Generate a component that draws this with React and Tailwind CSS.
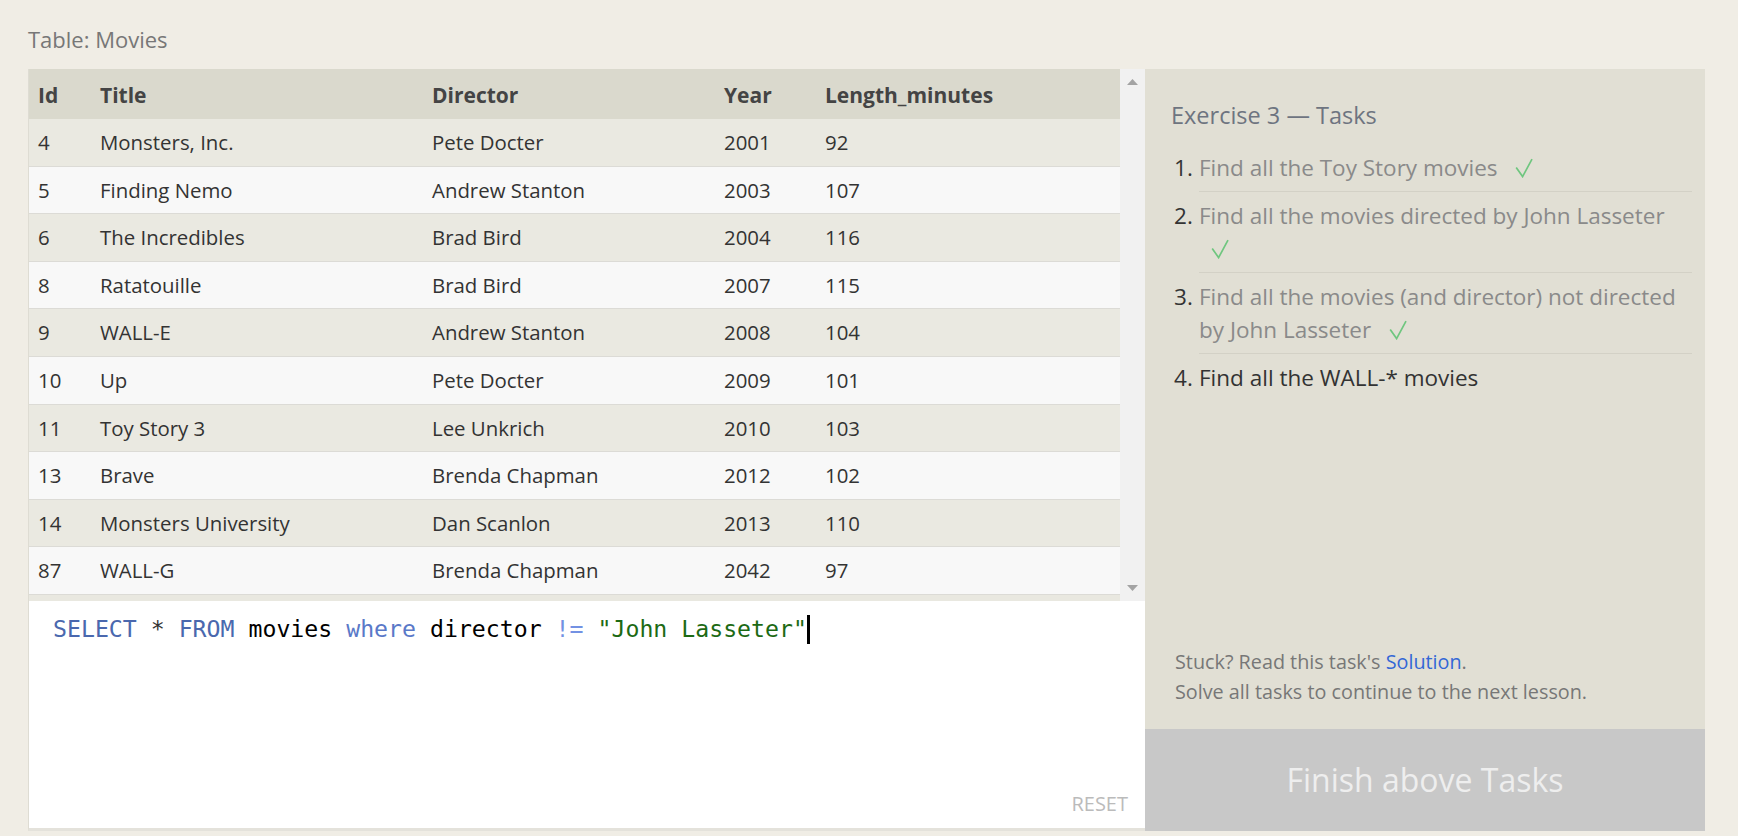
import React from 'react';

const rows = [
  [4, 'Monsters, Inc.', 'Pete Docter', 2001, 92],
  [5, 'Finding Nemo', 'Andrew Stanton', 2003, 107],
  [6, 'The Incredibles', 'Brad Bird', 2004, 116],
  [8, 'Ratatouille', 'Brad Bird', 2007, 115],
  [9, 'WALL-E', 'Andrew Stanton', 2008, 104],
  [10, 'Up', 'Pete Docter', 2009, 101],
  [11, 'Toy Story 3', 'Lee Unkrich', 2010, 103],
  [13, 'Brave', 'Brenda Chapman', 2012, 102],
  [14, 'Monsters University', 'Dan Scanlon', 2013, 110],
  [87, 'WALL-G', 'Brenda Chapman', 2042, 97],
];

const tasks = [
  { text: 'Find all the Toy Story movies', done: true },
  { text: 'Find all the movies directed by John Lasseter', done: true, breakCheck: true },
  { text: 'Find all the movies (and director) not directed by John Lasseter', done: true },
  { text: 'Find all the WALL-* movies', done: false },
];

function Check() {
  return (
    <svg width="18" height="20" viewBox="0 0 18 20" className="inline-block ml-3 -mt-1 align-middle">
      <path d="M1.2 9.5 L7.6 18.6 L17 1.2" fill="none" stroke="#6fc67f" strokeWidth="1.7" strokeLinejoin="miter" />
    </svg>
  );
}

function Cells({ cells, head }) {
  const widths = ['w-[62px]', 'w-[332px]', 'w-[292px]', 'w-[101px]', 'flex-1'];
  return cells.map((c, i) => (
    <div key={i} className={`${widths[i]} pl-[9px] ${head ? 'font-bold text-[#444]' : 'text-[#333]'}`}>
      {c}
    </div>
  ));
}

export default function App() {
  return (
    <div className="w-full h-[836px] bg-[#f0ede5] font-['Open_Sans',sans-serif] overflow-hidden">
      {/* Title */}
      <div className="pl-[28px] pt-[24px] h-[69px] text-[22px] leading-[30px] text-[#777]">Table: Movies</div>

      <div className="flex ml-[28px] w-[1677px] h-[762px]">
        {/* Left: table + editor */}
        <div className="w-[1117px] flex flex-col border-l border-[#dedcd3] border-b-[3px] border-b-[#e4e2db]">
          <div className="flex h-[532px]">
            <div className="flex-1 flex flex-col">
              <div className="flex items-center h-[50px] pt-[4px] bg-[#dad9cd] text-[21px]">
                <Cells head cells={['Id', 'Title', 'Director', 'Year', 'Length_minutes']} />
              </div>
              {rows.map((r, i) => (
                <div
                  key={i}
                  className={`flex items-center h-[47.6px] text-[20.4px] border-b border-[#dcdbd6] ${i % 2 === 0 ? 'bg-[#eae9e1]' : 'bg-[#f8f8f8]'}`}
                >
                  <Cells cells={r} />
                </div>
              ))}
              <div className="flex-1 bg-[#e9e8e0]" />
            </div>
            {/* scrollbar */}
            <div className="w-[25px] bg-[#f1f1f1] flex flex-col items-center justify-between pt-[10px] pb-[10px]">
              <svg width="11" height="6" viewBox="0 0 11 6">
                <polygon points="5.5,0 11,6 0,6" fill="#a3a3a3" />
              </svg>
              <svg width="11" height="6" viewBox="0 0 11 6">
                <polygon points="0,0 11,0 5.5,6" fill="#a3a3a3" />
              </svg>
            </div>
          </div>

          {/* Editor */}
          <div className="flex-1 bg-white flex flex-col justify-between pl-[24px] pr-[17px] pt-[13px] pb-[12px]">
            <div className="flex items-center font-['DejaVu_Sans_Mono',monospace] text-[23.2px] leading-[30px] whitespace-pre">
              <span className="text-[#4a68ae]">SELECT</span>
              <span className="text-[#333]"> * </span>
              <span className="text-[#4a68ae]">FROM</span>
              <span className="text-black"> movies </span>
              <span className="text-[#5a79c8]">where</span>
              <span className="text-black"> director </span>
              <span className="text-[#7391e3]">!=</span>
              <span className="text-black"> </span>
              <span className="text-[#1d6a14]">"John Lasseter"</span>
              <span className="inline-block w-[3px] h-[29px] bg-black" />
            </div>
            <div className="text-right text-[20px] leading-[24px] text-[#bbbbbb]">RESET</div>
          </div>
        </div>

        {/* Right: tasks */}
        <div className="w-[560px] bg-[#e1dfd4] flex flex-col">
          <div className="flex-1 flex flex-col pl-[26px] pr-[13px] pt-[30px]">
            <div className="text-[23.5px] leading-[32px] text-[#6e7480]">Exercise 3 — Tasks</div>
            <ol className="mt-[13px] ml-[3px]">
              {tasks.map((t, i) => (
                <li key={i} className="flex text-[22.5px] leading-[33px]">
                  <span className="w-[25px] shrink-0 py-[7px] text-[#333]">{i + 1}.</span>
                  <div className={`flex-1 py-[7px] ${i < tasks.length - 1 ? 'border-b border-[#d3d1c6]' : ''} ${t.done ? 'text-[#8a8a8a]' : 'text-[#333]'}`}>
                    {t.text}
                    {t.done && ' '}
                    {t.breakCheck && <br />}
                    {t.done && <Check />}
                  </div>
                </li>
              ))}
            </ol>
            <div className="mt-auto pl-[4px] pb-[22px] text-[19.8px] leading-[30px] text-[#777]">
              <div>
                Stuck? Read this task's <span className="text-[#3367d6]">Solution</span>.
              </div>
              <div>Solve all tasks to continue to the next lesson.</div>
            </div>
          </div>
          <div className="h-[102px] bg-[#c8c8c8] flex items-center justify-center text-[32px] text-[#eeeeee]">
            Finish above Tasks
          </div>
        </div>
      </div>
    </div>
  );
}
